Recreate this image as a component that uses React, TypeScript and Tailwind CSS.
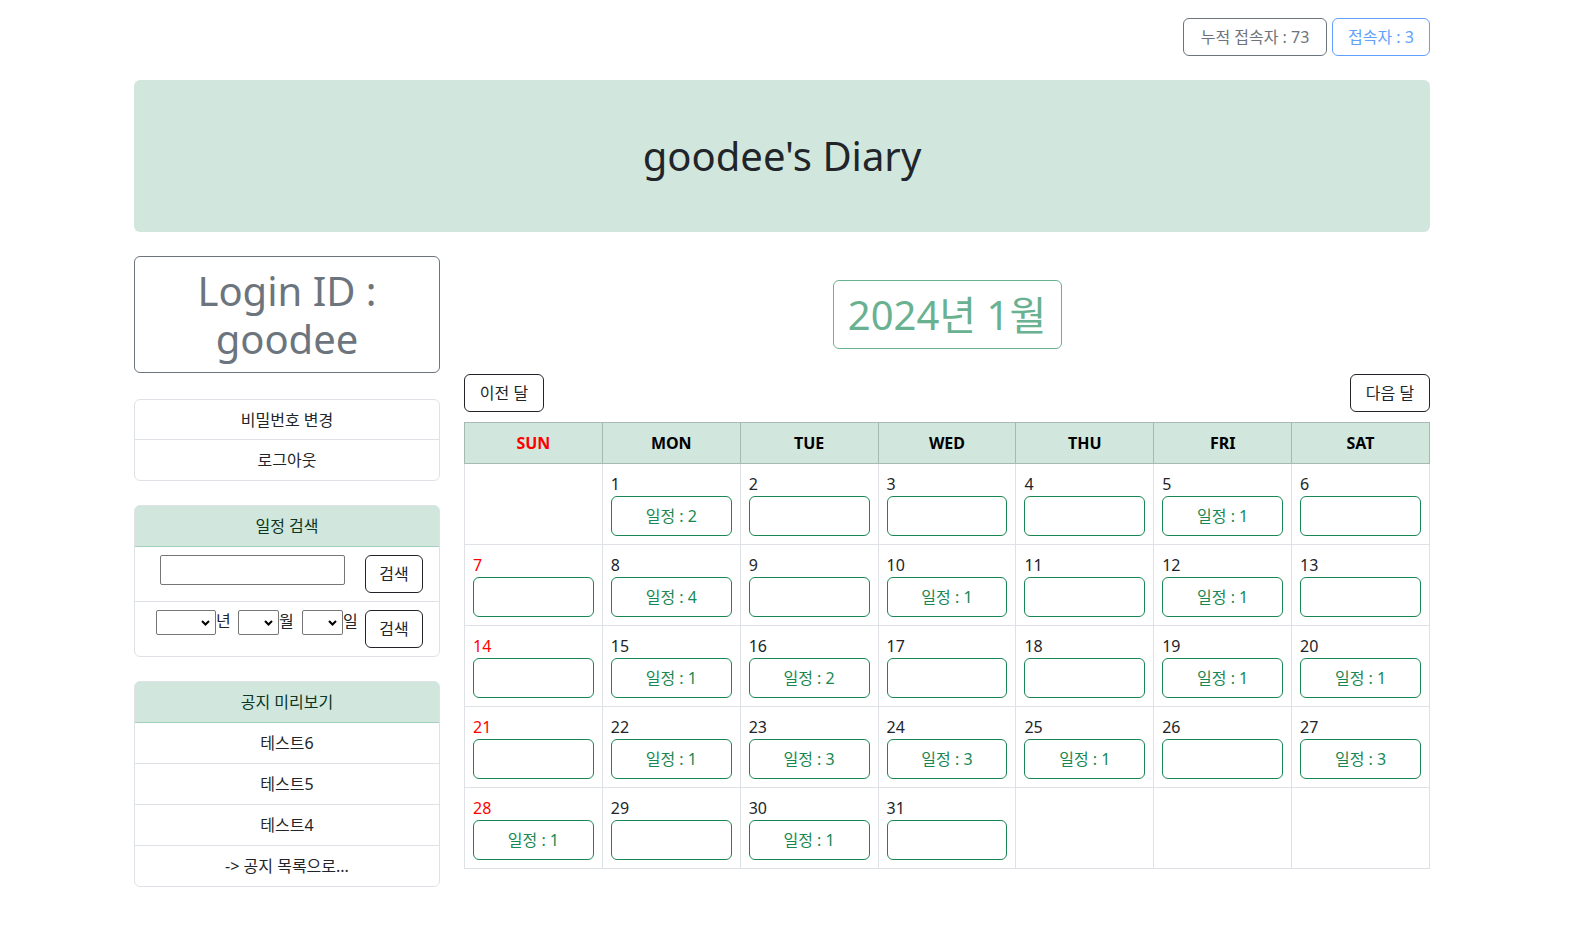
import React from "react";

const FONT = { fontFamily: '"Noto Sans", "Noto Sans CJK KR", sans-serif' };

type Cell = { d: number | null; n?: number };

const counts: Record<number, number> = {
  1: 2, 5: 1, 8: 4, 10: 1, 12: 1, 15: 1, 16: 2, 19: 1, 20: 1, 22: 1, 23: 3, 24: 3, 25: 1, 27: 3, 28: 1, 30: 1,
};

function buildWeeks(): Cell[][] {
  const cells: Cell[] = [{ d: null }];
  for (let i = 1; i <= 31; i++) cells.push({ d: i, n: counts[i] });
  while (cells.length % 7 !== 0) cells.push({ d: null });
  const weeks: Cell[][] = [];
  for (let i = 0; i < cells.length; i += 7) weeks.push(cells.slice(i, i + 7));
  return weeks;
}

function Chevron() {
  return (
    <svg className="pointer-events-none absolute right-[6px] top-1/2 -translate-y-1/2" width="9" height="6" viewBox="0 0 9 6">
      <path d="M1 1 L4.5 4.5 L8 1" fill="none" stroke="#000" strokeWidth="2" />
    </svg>
  );
}

function Sel({ w }: { w: string }) {
  return (
    <div className={`relative ${w} h-[25px]`}>
      <select className="h-full w-full appearance-none rounded-[2px] border border-[#767676] bg-white" />
      <Chevron />
    </div>
  );
}

export default function App() {
  const weeks = buildWeeks();
  const days = ["SUN", "MON", "TUE", "WED", "THU", "FRI", "SAT"];
  return (
    <div className="min-h-[930px] w-[1577px] bg-white text-[#212529]" style={FONT}>
      <div className="ml-[134px] w-[1296px]">
        {/* top buttons */}
        <div className="flex justify-end gap-[5px] pt-[18px]">
          <div className="flex h-[38px] w-[144px] items-center justify-center rounded-[6px] border border-[#6c757d] text-[16px] text-[#6c757d]">
            누적 접속자 : 73
          </div>
          <div className="flex h-[38px] w-[98px] items-center justify-center rounded-[6px] border border-[#61a0fd] text-[16px] text-[#61a0fd]">
            접속자 : 3
          </div>
        </div>

        {/* header */}
        <div className="mt-[24px] flex h-[152px] items-center justify-center rounded-[6px] bg-[#d1e7dd] text-[40px] leading-[48px] text-[#212529]">
          goodee's Diary
        </div>

        <div className="mt-[24px] flex">
          {/* left column */}
          <div className="w-[306px]">
            <div className="flex h-[117px] flex-col items-center justify-center rounded-[6px] border border-[#6c757d] text-[40px] leading-[48px] text-[#6c757d]">
              <div>Login ID :</div>
              <div>goodee</div>
            </div>

            <div className="mt-[26px] rounded-[6px] border border-[#dee2e6]">
              <div className="flex h-[40px] items-center justify-center border-b border-[#dee2e6] text-[16px]">비밀번호 변경</div>
              <div className="flex h-[40px] items-center justify-center text-[16px]">로그아웃</div>
            </div>

            <div className="mt-[24px] overflow-hidden rounded-[6px] border border-[#dee2e6]">
              <div className="-mx-px -mt-px flex h-[42px] items-center justify-center rounded-t-[6px] border border-[#a3cfbb] bg-[#d1e7dd] text-[16px] text-[#0a3622]">
                일정 검색
              </div>
              <div className="flex items-start border-b border-[#dee2e6] py-[8px] pl-[25px]">
                <input className="h-[30px] w-[185px] rounded-[2px] border border-[#767676]" />
                <button className="ml-[20px] h-[38px] w-[58px] rounded-[6px] border border-[#212529] text-[16px]">검색</button>
              </div>
              <div className="flex items-start pb-[8px] pl-[21px] pt-[8px]">
                <Sel w="w-[60px]" />
                <span className="w-[22px] text-[16px] leading-[22px]">년</span>
                <Sel w="w-[41px]" />
                <span className="w-[23px] text-[16px] leading-[22px]">월</span>
                <Sel w="w-[41px]" />
                <span className="w-[22px] text-[16px] leading-[22px]">일</span>
                <button className="h-[38px] w-[58px] rounded-[6px] border border-[#212529] text-[16px]">검색</button>
              </div>
            </div>

            <div className="mt-[24px] overflow-hidden rounded-[6px] border border-[#dee2e6]">
              <div className="-mx-px -mt-px flex h-[42px] items-center justify-center rounded-t-[6px] border border-[#a3cfbb] bg-[#d1e7dd] text-[16px] text-[#0a3622]">
                공지 미리보기
              </div>
              {["테스트6", "테스트5", "테스트4"].map((t) => (
                <div key={t} className="flex h-[41px] items-center justify-center border-b border-[#dee2e6] text-[16px]">
                  {t}
                </div>
              ))}
              <div className="flex h-[40px] items-center justify-center text-[16px]">-&gt; 공지 목록으로...</div>
            </div>
          </div>

          {/* right column */}
          <div className="ml-[24px] w-[966px]">
            <div className="mt-[24px] flex justify-center">
              <div className="flex h-[69px] w-[229px] items-center justify-center rounded-[6px] border border-[#69b190] text-[40px] text-[#69b190]">
                2024년 1월
              </div>
            </div>
            <div className="mt-[25px] flex justify-between">
              <button className="h-[38px] w-[80px] rounded-[6px] border border-[#212529] text-[16px]">이전 달</button>
              <button className="h-[38px] w-[80px] rounded-[6px] border border-[#212529] text-[16px]">다음 달</button>
            </div>
            <table className="mt-[10px] w-[966px] table-fixed border-collapse">
              <thead>
                <tr>
                  {days.map((d, i) => (
                    <th
                      key={d}
                      className={`h-[41px] border border-[#a7b9b1] bg-[#d1e7dd] p-0 text-[16px] font-bold ${i === 0 ? "text-[#ff0000]" : "text-[#000]"}`}
                    >
                      {d}
                    </th>
                  ))}
                </tr>
              </thead>
              <tbody>
                {weeks.map((w, wi) => (
                  <tr key={wi}>
                    {w.map((c, ci) => (
                      <td key={ci} className="h-[81px] border border-[#dee2e6] px-[8px] pb-[8px] pt-[8px] align-top">
                        {c.d !== null && (
                          <>
                            <div className={`h-[24px] text-[16px] leading-[24px] ${ci === 0 ? "text-[#ff0000]" : "text-[#212529]"}`}>
                              {c.d}
                            </div>
                            <div className="flex h-[40px] w-full items-center justify-center rounded-[6px] border border-[#198754] text-[16px] text-[#198754]">
                              {c.n ? `일정 : ${c.n}` : ""}
                            </div>
                          </>
                        )}
                      </td>
                    ))}
                  </tr>
                ))}
              </tbody>
            </table>
          </div>
        </div>
      </div>
    </div>
  );
}
